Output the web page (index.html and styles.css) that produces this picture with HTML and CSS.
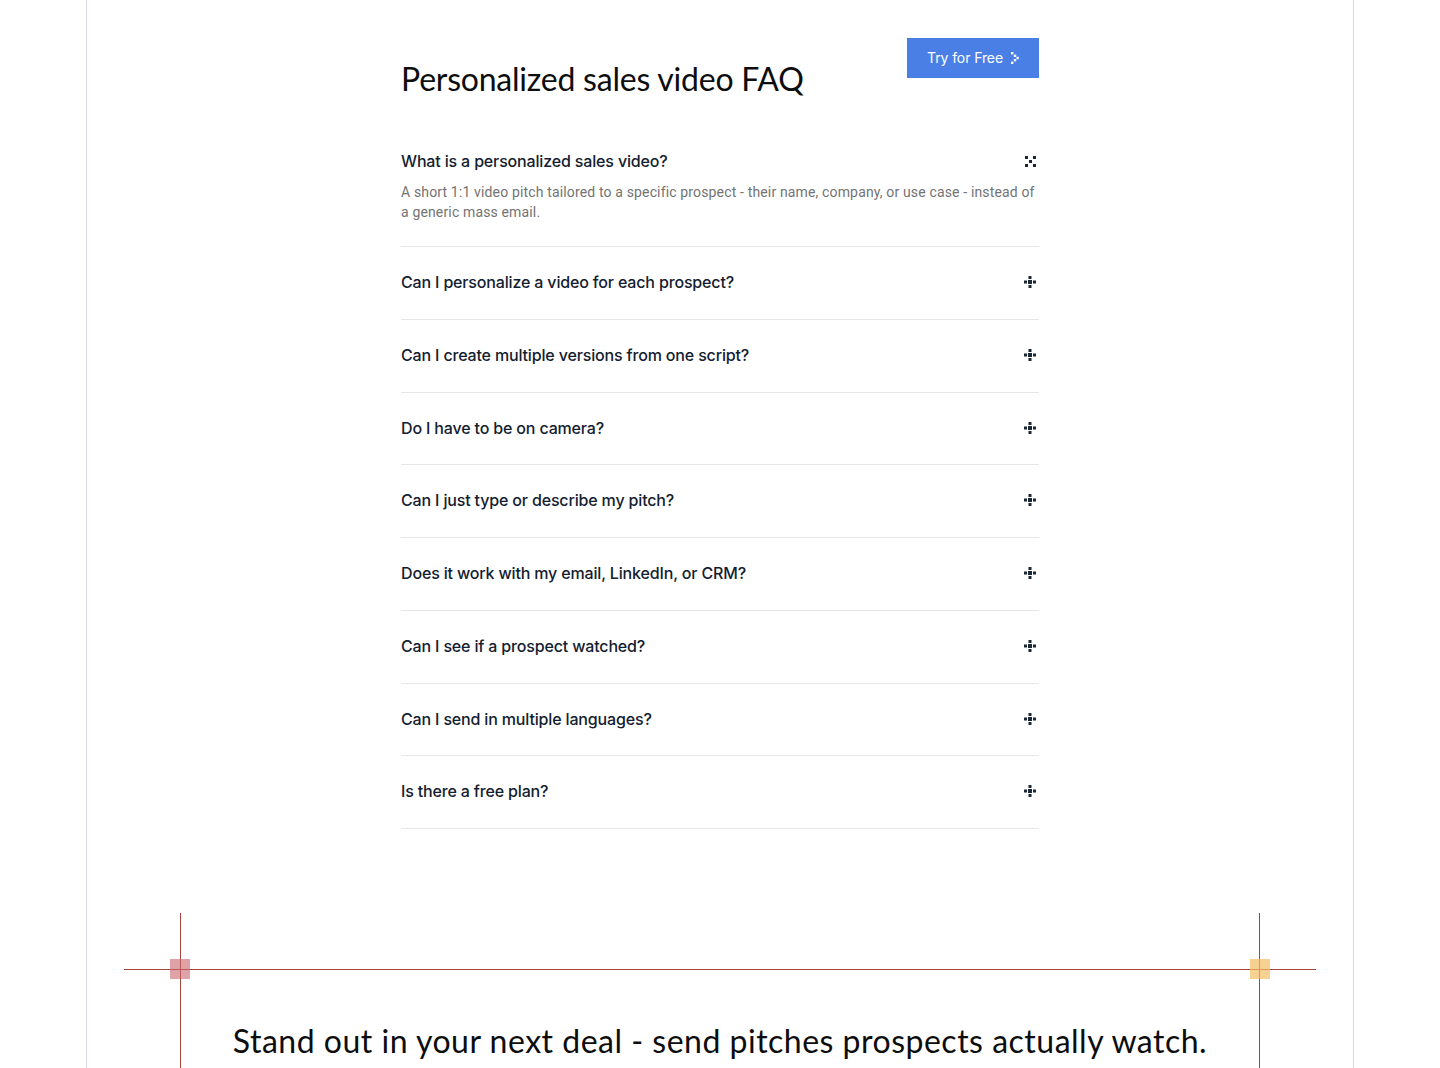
FILE: index.html
```html
<!DOCTYPE html>
<html lang="en">
<head>
<meta charset="utf-8">
<title>Personalized sales video FAQ</title>
<link rel="stylesheet" href="styles.css">
</head>
<body>
<div class="frame">
  <section class="faq">
    <header class="faq-head">
      <h2 class="faq-title">Personalized sales video FAQ</h2>
      <a class="btn" href="#">Try for Free
        <svg class="btn-arrow" width="8" height="12" viewBox="0 0 8 12"><rect x="0" y="0" width="2.4" height="2.4" fill="#fff"/><rect x="2.8" y="2.6" width="2.4" height="2.4" fill="#fff"/><rect x="5.4" y="4.8" width="2.4" height="2.4" fill="#fff"/><rect x="2.8" y="7" width="2.4" height="2.4" fill="#fff"/><rect x="0" y="9.6" width="2.4" height="2.4" fill="#fff"/></svg>
      </a>
    </header>
    <div class="faq-list">
      <div class="faq-item open">
        <div class="q"><span>What is a personalized sales video?</span>
          <svg class="ico" width="11" height="11" viewBox="0 0 11 11"><rect x="0" y="0" width="3" height="3"/><rect x="8" y="0" width="3" height="3"/><rect x="4" y="4" width="3" height="3"/><rect x="0" y="8" width="3" height="3"/><rect x="8" y="8" width="3" height="3"/></svg>
        </div>
        <p class="a">A short 1:1 video pitch tailored to a specific prospect - their name, company, or use case - instead of a generic mass email.</p>
      </div>
      <div class="faq-item"><div class="q"><span>Can I personalize a video for each prospect?</span><svg class="ico" width="12" height="12" viewBox="0 0 12 12"><rect x="4.5" y="0" width="3" height="3"/><rect x="0" y="4.5" width="3" height="3"/><rect x="4" y="4" width="4" height="4"/><rect x="9" y="4.5" width="3" height="3"/><rect x="4.5" y="9" width="3" height="3"/></svg></div></div>
      <div class="faq-item"><div class="q"><span>Can I create multiple versions from one script?</span><svg class="ico" width="12" height="12" viewBox="0 0 12 12"><rect x="4.5" y="0" width="3" height="3"/><rect x="0" y="4.5" width="3" height="3"/><rect x="4" y="4" width="4" height="4"/><rect x="9" y="4.5" width="3" height="3"/><rect x="4.5" y="9" width="3" height="3"/></svg></div></div>
      <div class="faq-item"><div class="q"><span>Do I have to be on camera?</span><svg class="ico" width="12" height="12" viewBox="0 0 12 12"><rect x="4.5" y="0" width="3" height="3"/><rect x="0" y="4.5" width="3" height="3"/><rect x="4" y="4" width="4" height="4"/><rect x="9" y="4.5" width="3" height="3"/><rect x="4.5" y="9" width="3" height="3"/></svg></div></div>
      <div class="faq-item"><div class="q"><span>Can I just type or describe my pitch?</span><svg class="ico" width="12" height="12" viewBox="0 0 12 12"><rect x="4.5" y="0" width="3" height="3"/><rect x="0" y="4.5" width="3" height="3"/><rect x="4" y="4" width="4" height="4"/><rect x="9" y="4.5" width="3" height="3"/><rect x="4.5" y="9" width="3" height="3"/></svg></div></div>
      <div class="faq-item"><div class="q"><span>Does it work with my email, LinkedIn, or CRM?</span><svg class="ico" width="12" height="12" viewBox="0 0 12 12"><rect x="4.5" y="0" width="3" height="3"/><rect x="0" y="4.5" width="3" height="3"/><rect x="4" y="4" width="4" height="4"/><rect x="9" y="4.5" width="3" height="3"/><rect x="4.5" y="9" width="3" height="3"/></svg></div></div>
      <div class="faq-item"><div class="q"><span>Can I see if a prospect watched?</span><svg class="ico" width="12" height="12" viewBox="0 0 12 12"><rect x="4.5" y="0" width="3" height="3"/><rect x="0" y="4.5" width="3" height="3"/><rect x="4" y="4" width="4" height="4"/><rect x="9" y="4.5" width="3" height="3"/><rect x="4.5" y="9" width="3" height="3"/></svg></div></div>
      <div class="faq-item"><div class="q"><span>Can I send in multiple languages?</span><svg class="ico" width="12" height="12" viewBox="0 0 12 12"><rect x="4.5" y="0" width="3" height="3"/><rect x="0" y="4.5" width="3" height="3"/><rect x="4" y="4" width="4" height="4"/><rect x="9" y="4.5" width="3" height="3"/><rect x="4.5" y="9" width="3" height="3"/></svg></div></div>
      <div class="faq-item"><div class="q"><span>Is there a free plan?</span><svg class="ico" width="12" height="12" viewBox="0 0 12 12"><rect x="4.5" y="0" width="3" height="3"/><rect x="0" y="4.5" width="3" height="3"/><rect x="4" y="4" width="4" height="4"/><rect x="9" y="4.5" width="3" height="3"/><rect x="4.5" y="9" width="3" height="3"/></svg></div></div>
    </div>
  </section>

  <section class="cta">
    <span class="vline vline-left"></span>
    <span class="vline vline-right"></span>
    <span class="hline"></span>
    <span class="sq sq-pink"></span>
    <span class="sq sq-yellow"></span>
    <h2 class="cta-title">Stand out in your next deal - send pitches prospects actually watch.</h2>
  </section>
</div>
</body>
</html>
```

FILE: styles.css
```css
* { box-sizing: border-box; }
html, body { margin: 0; padding: 0; background: #fff; }
body { font-family: Inter, "Noto Sans", sans-serif; color: #13202f; }

.frame {
  width: 1268px;
  margin: 0 auto;
  border-left: 1px solid #d6d9e3;
  border-right: 1px solid #d6d9e3;
  min-height: 1068px;
}

.faq {
  width: 638px;
  margin: 0 auto;
  padding-top: 38px;
}

.faq-head {
  display: flex;
  justify-content: space-between;
  align-items: flex-start;
  margin-bottom: 26px;
}

.faq-title {
  margin: 21px 0 0;
  font-family: Lato, "Liberation Sans", sans-serif;
  font-weight: 400;
  font-size: 32px;
  line-height: 40px;
  letter-spacing: -0.22px;
  color: #0d0d0d;
}

.btn {
  display: flex;
  align-items: center;
  gap: 8px;
  height: 40px;
  padding: 0 20px;
  background: #4a7fe6;
  color: #fff;
  font-family: Inter, sans-serif;
  font-size: 14px;
  font-weight: 400;
  letter-spacing: -0.1px;
  line-height: 38px;
  text-decoration: none;
}
.btn-arrow { display: block; }

.faq-item {
  padding: 25px 0 26.75px;
  border-bottom: 1px solid #e5e7eb;
}
.faq-item.open { padding-top: 26px; padding-bottom: 24px; }

.q {
  display: flex;
  justify-content: space-between;
  align-items: center;
  font-size: 16px;
  line-height: 20px;
  font-weight: 500;
  letter-spacing: -0.16px;
  color: #13202f;
}
.ico { fill: #1b2636; margin-right: 3px; display: block; }

.a {
  margin: 11px 0 0;
  font-family: Roboto, "Liberation Sans", sans-serif;
  font-size: 14px;
  line-height: 20px;
  letter-spacing: 0.15px;
  color: #737373;
  font-weight: 400;
}

.cta {
  position: relative;
  margin-top: 84px;
  height: 220px;
  padding-top: 108px;
}
.vline {
  position: absolute;
  top: 0;
  bottom: 0;
  width: 1px;
  background: #a5453e;
}
.vline-left { left: 93px; }
.vline-right { left: 1172px; }
.hline {
  position: absolute;
  top: 56px;
  left: 37px;
  width: 1192px;
  height: 1px;
  background: #a5453e;
}
.sq {
  position: absolute;
  top: 46px;
  width: 20px;
  height: 20px;
}
.sq-pink { left: 83px; background: rgba(200, 100, 108, 0.6); }
.sq-yellow { left: 1163px; background: rgba(242, 190, 100, 0.7); }

.cta-title {
  margin: 0;
  text-align: center;
  font-family: Lato, "Liberation Sans", sans-serif;
  font-weight: 400;
  font-size: 32px;
  line-height: 40px;
  letter-spacing: 0.5px;
  color: #0d0d0d;
}
```
